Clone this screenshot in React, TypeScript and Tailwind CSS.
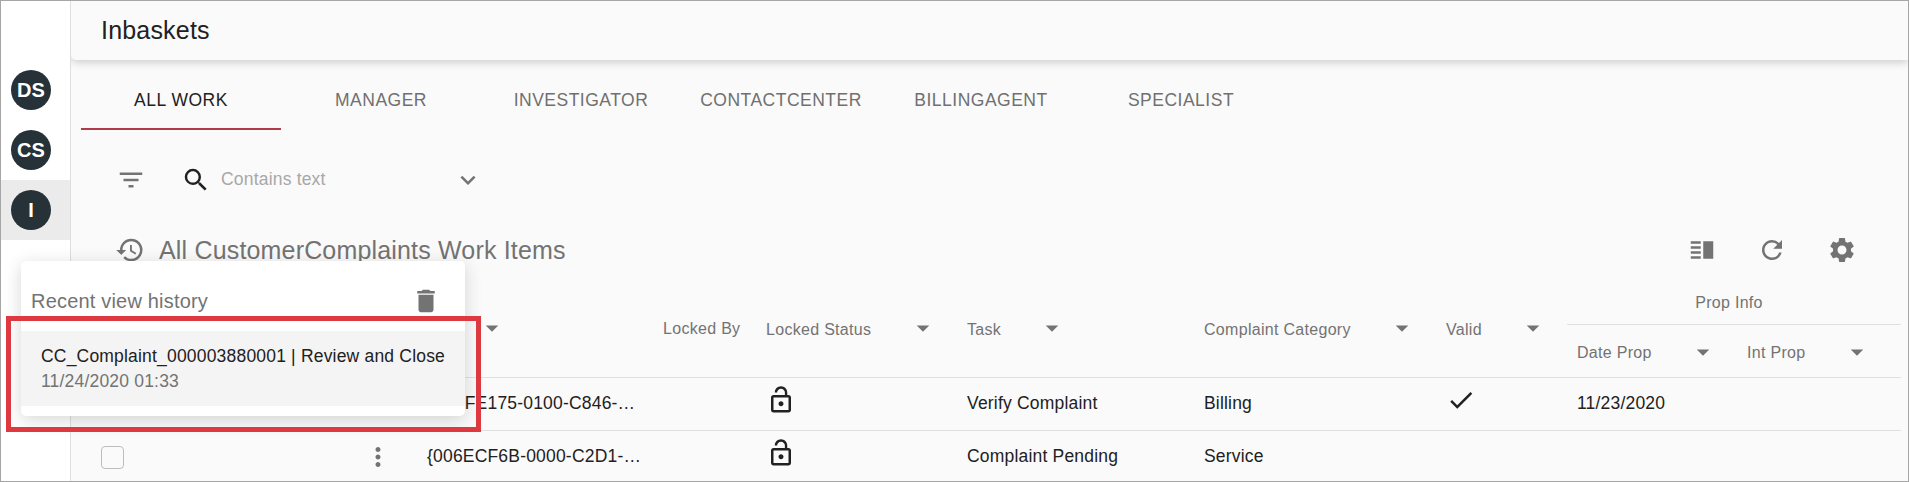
import type { ReactNode } from "react";
import {
  MdFilterList, MdSearch, MdExpandMore, MdHistory, MdDelete, MdVerticalSplit,
  MdRefresh, MdSettings, MdMoreVert, MdArrowDropDown, MdLockOpen, MdCheck,
} from "react-icons/md";

const grey = "text-[#737373]";

function Avatar({ label, active = false }: { label: string; active?: boolean }) {
  return (
    <div className={`flex h-15 items-center pl-[10px] ${active ? "bg-[#ebebeb]" : ""}`}>
      <div className="flex size-10 items-center justify-center rounded-full bg-[#263238] text-[20px] leading-none font-bold text-white">
        {label}
      </div>
    </div>
  );
}

function Head({ label, gap, className = "" }: { label: string; gap?: string; className?: string }) {
  return (
    <div className={`flex items-center text-[16px] tracking-[0.3px] whitespace-nowrap ${grey} ${className}`}>
      <span className={`pt-[2px] ${gap ?? ""}`}>{label}</span>
      {gap && <MdArrowDropDown className="mb-px size-[30px] shrink-0" />}
    </div>
  );
}

const cols = "grid grid-cols-[356px_236px_103px_201px_237px_242px_131px_170px_154px]";

function Row({ id, task, category, valid, date }: {
  id: string; task: string; category: string; valid?: boolean; date?: string;
}) {
  const cell = (c: ReactNode) => <div className="flex items-center whitespace-nowrap">{c}</div>;
  return (
    <div className={`${cols} h-[53px] shrink-0 border-b border-[#e0e0e0] pb-[2px] text-[17.5px] tracking-[0.19px] text-[#212121]`}>
      <div className="flex items-center">
        <div className="mt-[3px] ml-[30px] size-[23px] rounded-[4px] border border-[#bdbdbd]" />
        <MdMoreVert className={`mt-[2px] ml-[239px] size-[30px] shrink-0 ${grey}`} />
      </div>
      {cell(id)}
      <div />
      {cell(<MdLockOpen className="mb-[6px] size-[30px]" />)}
      {cell(task)}
      {cell(category)}
      {cell(valid && <MdCheck className="mb-[6px] size-[30px]" />)}
      {cell(date)}
      <div />
    </div>
  );
}

export default function App() {
  return (
    <div className="relative flex h-[482px] w-[1909px] overflow-hidden border border-[#a6a6a6] bg-[#fafafa] font-['Liberation_Sans',Arial,sans-serif]">
      <aside className="w-[70px] shrink-0 border-r border-[#dedede] bg-white pt-[59px]">
        <Avatar label="DS" />
        <Avatar label="CS" />
        <Avatar label="I" active />
      </aside>

      <main className="flex min-w-0 flex-1 flex-col overflow-hidden">
        <header className="flex h-[59px] shrink-0 items-center rounded-bl-[5px] pl-[30px] text-[25px] tracking-[0.19px] text-[#212121] shadow-[0_2px_10px_rgba(0,0,0,0.2)]">
          Inbaskets
        </header>

        <nav className="mt-[10px] ml-[10px] flex h-15 shrink-0 text-[17.5px] tracking-[0.5px]">
          {["ALL WORK", "MANAGER", "INVESTIGATOR", "CONTACTCENTER", "BILLINGAGENT", "SPECIALIST"].map((t, i) => (
            <div
              key={t}
              className={`flex w-[200px] items-center justify-center border-b-2 pt-[3px] ${i === 0 ? "border-[#b03a48] text-[#212121]" : "border-transparent text-[#707070]"}`}
            >
              {t}
            </div>
          ))}
        </nav>

        <div className="mt-[35px] flex h-[30px] shrink-0 items-center pl-[45px]">
          <MdFilterList className={`size-[30px] ${grey}`} />
          <MdSearch className="ml-[35px] size-[30px] text-[#212121]" />
          <span className="mb-[2px] ml-[10px] w-[228px] text-[17.5px] tracking-[0.19px] text-[#a8a8a8]">Contains text</span>
          <MdExpandMore className={`ml-[4px] size-[30px] ${grey}`} />
        </div>

        <div className={`mt-[40px] flex h-[30px] shrink-0 items-center pl-[44px] ${grey}`}>
          <MdHistory className="size-[30px]" />
          <span className="mt-[2px] ml-[14px] flex-1 text-[25px] tracking-[0.17px]">All CustomerComplaints Work Items</span>
          <MdVerticalSplit className="size-[30px]" />
          <MdRefresh className="ml-10 size-[30px]" />
          <MdSettings className="mr-[51px] ml-10 size-[30px]" />
        </div>

        <section className="mt-[12px] flex w-[1830px] flex-col">
          <div className={`${cols} h-[101px] shrink-0 border-b border-[#e0e0e0]`}>
            <div />
            <Head label="" gap="w-[50px]" className="pt-[3px]" />
            <Head label="Locked By" className="pt-[1px]" />
            <Head label="Locked Status" gap="w-[142px]" className="pt-[3px]" />
            <Head label="Task" gap="w-[70px]" className="pt-[3px]" />
            <Head label="Complaint Category" gap="w-[183px]" className="pt-[3px]" />
            <Head label="Valid" gap="w-[72px]" className="pt-[3px]" />
            <div className="col-span-2 -ml-[10px] w-[334px]">
              <div className={`flex h-[48px] items-center justify-center border-b border-[#e0e0e0] pt-[5px] pr-[10px] text-[16px] tracking-[0.3px] ${grey}`}>
                Prop Info
              </div>
              <div className="flex h-[52px] items-center pt-[2px] pl-[10px]">
                <Head label="Date Prop" gap="w-[111px]" className="w-[170px]" />
                <Head label="Int Prop" gap="w-[95px]" />
              </div>
            </div>
          </div>
          <Row id="{00BFE175-0100-C846-…" task="Verify Complaint" category="Billing" valid date="11/23/2020" />
          <Row id="{006ECF6B-0000-C2D1-…" task="Complaint Pending" category="Service" />
        </section>
      </main>

      <div className="absolute top-[260px] left-5 h-[155px] w-[444px] rounded-[5px] bg-white shadow-[0_4px_18px_rgba(0,0,0,0.16)]">
        <div className={`flex h-[70px] items-center pt-[10px] pr-[24px] pl-[10px] text-[20px] tracking-[0.19px] ${grey}`}>
          <span className="flex-1">Recent view history</span>
          <MdDelete className="size-[30px]" />
        </div>
        <div className="h-[75px] bg-[#f4f4f4] pt-[13px] pl-5 text-[17.5px] leading-[25px] tracking-[0.19px]">
          <div className="text-[#212121]">CC_Complaint_000003880001 | Review and Close</div>
          <div className={grey}>11/24/2020 01:33</div>
        </div>
      </div>

      <div className="absolute top-[315px] left-[5px] h-[116px] w-[475px] border-[5px] border-[#dc3a40]" />
    </div>
  );
}
